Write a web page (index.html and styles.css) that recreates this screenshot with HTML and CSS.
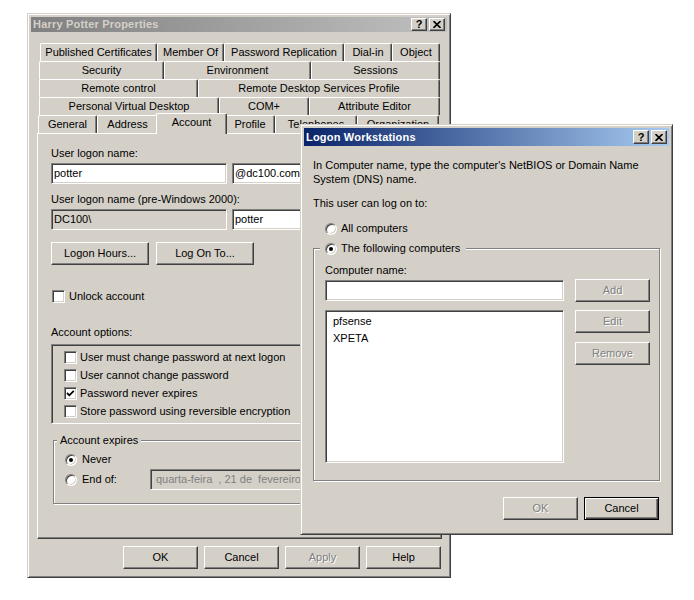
FILE: index.html
```html
<!DOCTYPE html>
<html lang="en">
<head>
    <meta charset="UTF-8">
    <title>Harry Potter Properties</title>
    <link rel="stylesheet" href="styles.css">
</head>
<body>
<div class="desk">

    <!-- properties sheet (inactive) -->
    <section class="win props">
        <div class="title off">
            <span>Harry Potter Properties</span>
            <div class="tbtns">
                <span class="tb">?</span>
                <span class="tb"><svg width="8" height="7" viewBox="0 0 8 7"><path d="M0.5 0 L7.5 7 M7.5 0 L0.5 7" stroke="#000" stroke-width="1.6"/></svg></span>
            </div>
        </div>

        <div class="sheet">
            <div class="tabs">
                <div class="tabrow r1">
                    <span class="tab">Published Certificates</span>
                    <span class="tab">Member Of</span>
                    <span class="tab">Password Replication</span>
                    <span class="tab">Dial-in</span>
                    <span class="tab">Object</span>
                </div>
                <div class="tabrow r2">
                    <span class="tab">Security</span>
                    <span class="tab">Environment</span>
                    <span class="tab">Sessions</span>
                </div>
                <div class="tabrow r3">
                    <span class="tab">Remote control</span>
                    <span class="tab">Remote Desktop Services Profile</span>
                </div>
                <div class="tabrow r4">
                    <span class="tab">Personal Virtual Desktop</span>
                    <span class="tab">COM+</span>
                    <span class="tab">Attribute Editor</span>
                </div>
                <div class="tabrow r5">
                    <span class="tab">General</span>
                    <span class="tab">Address</span>
                    <span class="tab sel">Account</span>
                    <span class="tab">Profile</span>
                    <span class="tab">Telephones</span>
                    <span class="tab">Organization</span>
                </div>
            </div>

            <div class="panel">
                <div class="lbl">User logon name:</div>
                <div class="pair">
                    <div class="field w176">potter</div>
                    <div class="field w180">@dc100.com</div>
                </div>

                <div class="lbl mt9">User logon name (pre-Windows 2000):</div>
                <div class="pair mt2">
                    <div class="field ro w176">DC100\</div>
                    <div class="field w180">potter</div>
                </div>

                <div class="btnrow">
                    <span class="btn w98">Logon Hours...</span>
                    <span class="btn w98">Log On To...</span>
                </div>

                <div class="check unlock">
                    <span class="cb"></span>
                    <span>Unlock account</span>
                </div>

                <div class="lbl mt23">Account options:</div>
                <div class="opts">
                    <div class="check opt"><span class="cb"></span><span>User must change password at next logon</span></div>
                    <div class="check opt"><span class="cb"></span><span>User cannot change password</span></div>
                    <div class="check opt">
                        <span class="cb"><svg width="11" height="11" viewBox="0 0 11 11"><path d="M2 5 L4.3 7.3 L8.8 2.8" fill="none" stroke="#000" stroke-width="1.8"/></svg></span>
                        <span>Password never expires</span>
                    </div>
                    <div class="check opt"><span class="cb"></span><span>Store password using reversible encryption</span></div>
                </div>

                <div class="group expires">
                    <div class="cap">Account expires</div>
                    <div class="radio never"><span class="rb on"></span><span>Never</span></div>
                    <div class="radio endof">
                        <span class="rb"></span>
                        <span class="rlabel">End of:</span>
                        <div class="field dis date">quarta-feira  , 21 de  fevereiro  de 2018</div>
                    </div>
                </div>
            </div>

            <div class="actions">
                <span class="btn">OK</span>
                <span class="btn">Cancel</span>
                <span class="btn off">Apply</span>
                <span class="btn">Help</span>
            </div>
        </div>
    </section>

    <!-- logon workstations (active) -->
    <section class="win logon">
        <div class="title on">
            <span>Logon Workstations</span>
            <div class="tbtns">
                <span class="tb">?</span>
                <span class="tb"><svg width="8" height="7" viewBox="0 0 8 7"><path d="M0.5 0 L7.5 7 M7.5 0 L0.5 7" stroke="#000" stroke-width="1.6"/></svg></span>
            </div>
        </div>

        <div class="wbody">
            <p class="intro">In Computer name, type the computer's NetBIOS or Domain Name<br>System (DNS) name.</p>
            <div class="lbl mt11">This user can log on to:</div>

            <div class="radio allpc"><span class="rb"></span><span>All computers</span></div>

            <div class="group following">
                <div class="cap radio"><span class="rb on"></span><span>The following computers</span></div>
                <div class="lbl mt9">Computer name:</div>
                <div class="picker">
                    <div class="pcol">
                        <div class="field name"></div>
                        <ul class="list">
                            <li>pfsense</li>
                            <li>XPETA</li>
                        </ul>
                    </div>
                    <div class="bcol">
                        <span class="btn off">Add</span>
                        <span class="btn off">Edit</span>
                        <span class="btn off">Remove</span>
                    </div>
                </div>
            </div>

            <div class="actions foot">
                <span class="btn off">OK</span>
                <span class="btn def">Cancel</span>
            </div>
        </div>
    </section>

</div>
</body>
</html>
```

FILE: styles.css
```css
* {
    box-sizing: border-box;
}
body {
    margin: 0;
    background: #fff;
    color: #000;
    font: 11px/13px "Liberation Sans", Arial, sans-serif;
}
.desk {
    position: relative;
    width: 694px;
    height: 600px;
    overflow: hidden;
}

/* window frame */
.win {
    position: absolute;
    background: #d4d0c8;
    border: 1px solid;
    border-color: #d4d0c8 #404040 #404040 #d4d0c8;
    box-shadow: inset 1px 1px #fff, inset -1px -1px #808080;
    padding: 3px;
}
.props {
    left: 27px;
    top: 13px;
    width: 424px;
    height: 565px;
}
.logon {
    left: 300px;
    top: 124px;
    width: 373px;
    height: 411px;
}
.title {
    height: 18px;
    display: flex;
    align-items: center;
    justify-content: space-between;
    padding: 0 2px 0 2px;
    font-weight: bold;
    letter-spacing: 0.2px;
}
.title.off {
    height: 15px;
    background: linear-gradient(to right, #808080, #c0c0c0);
    color: #d4d0c8;
}
.title.on {
    background: linear-gradient(to right, #0a246a, #a6caf0);
    color: #fff;
}
.tbtns {
    display: flex;
    gap: 2px;
}
.tb {
    width: 16px;
    height: 14px;
    display: flex;
    align-items: center;
    justify-content: center;
    background: #d4d0c8;
    color: #000;
    border: 1px solid;
    border-color: #fff #404040 #404040 #fff;
    box-shadow: inset -1px -1px #808080;
    font-size: 11px;
    letter-spacing: 0;
}
.title.off .tb {
    width: 16px;
    height: 13px;
}

/* common controls */
.lbl {
    line-height: 13px;
}
.mt2 { margin-top: 2px; }
.mt9 { margin-top: 9px; }
.mt11 { margin-top: 11px; }
.mt23 { margin-top: 23px; }

.field {
    height: 21px;
    background: #fff;
    border: 1px solid;
    border-color: #808080 #fff #fff #808080;
    box-shadow: inset 1px 1px #404040, inset -1px -1px #d4d0c8;
    padding: 0 2px;
    line-height: 19px;
    white-space: pre;
    overflow: hidden;
}
.field.ro {
    background: #d4d0c8;
}
.field.dis {
    background: #d4d0c8;
    color: #808080;
    padding-left: 5px;
}
.btn {
    width: 75px;
    height: 23px;
    display: flex;
    align-items: center;
    justify-content: center;
    background: #d4d0c8;
    border: 1px solid;
    border-color: #fff #404040 #404040 #fff;
    box-shadow: inset -1px -1px #808080;
}
.btn.off {
    color: #808080;
    text-shadow: 1px 1px #fff;
}
.btn.def {
    border-color: #000;
    box-shadow: inset 1px 1px #fff, inset -1px -1px #404040, inset -2px -2px #808080;
}
.check, .radio {
    display: flex;
    align-items: center;
}
.cb {
    width: 13px;
    height: 13px;
    flex: none;
    display: flex;
    align-items: center;
    justify-content: center;
    background: #fff;
    border: 1px solid;
    border-color: #808080 #fff #fff #808080;
    box-shadow: inset 1px 1px #404040, inset -1px -1px #d4d0c8;
}
.rb {
    position: relative;
    width: 12px;
    height: 12px;
    flex: none;
    border-radius: 50%;
    background: #fff;
    border: 1px solid;
    border-color: #808080 #fff #fff #808080;
    box-shadow: inset 1px 1px #404040, inset -1px -1px #d4d0c8;
    margin-right: 5px;
}
.rb.on::after {
    content: "";
    position: absolute;
    left: 3px;
    top: 3px;
    width: 4px;
    height: 4px;
    border-radius: 50%;
    background: #000;
}
.group {
    border: 1px solid #808080;
    box-shadow: inset 1px 1px #fff, 1px 1px #fff;
}
.cap {
    width: fit-content;
    margin-top: -7px;
    background: #d4d0c8;
    line-height: 13px;
}

/* property sheet */
.sheet {
    padding: 11px 5px 0 6px;
}
.tabs {
    padding: 0 2px;
}
.tabrow {
    display: grid;
    height: 18px;
}
.r1 { grid-template-columns: 117px 67px 120px 48px 48px; margin-left: 1px; }
.r2 { grid-template-columns: 125px 147px 129px; }
.r3 { grid-template-columns: 159px 242px; }
.r4 { grid-template-columns: 180px 90px 131px; }
.r5 { grid-template-columns: 59px 61px 67px 50px 82px 82px; margin-left: -1px; }
.tab {
    height: 18px;
    background: #d4d0c8;
    border: 1px solid;
    border-bottom: 0;
    border-color: #fff #404040 #404040 #fff;
    border-radius: 2px 2px 0 0;
    box-shadow: inset -1px 0 #808080;
    text-align: center;
    line-height: 17px;
    white-space: nowrap;
    overflow: hidden;
}
.tab.sel {
    position: relative;
    z-index: 1;
    height: 21px;
    margin: -2px -2px 0;
    line-height: 16px;
}
.panel {
    height: 406px;
    border: 1px solid;
    border-color: #fff #404040 #404040 #fff;
    box-shadow: inset -1px -1px #808080;
    padding: 13px 0 0 13px;
}
.pair {
    display: flex;
    gap: 5px;
    margin-top: 3px;
}
.w176 { width: 176px; }
.w180 { width: 180px; }
.btnrow {
    display: flex;
    gap: 7px;
    margin-top: 12px;
}
.btn.w98 {
    width: 98px;
}
.unlock {
    margin: 25px 0 0 1px;
    gap: 4px;
}
.opts {
    width: 382px;
    height: 80px;
    margin-top: 5px;
    border: 1px solid;
    border-color: #808080 #fff #fff #808080;
    box-shadow: inset 1px 1px #404040;
    padding: 3px 0 0 12px;
}
.opt {
    height: 18px;
    gap: 3px;
}
.expires {
    width: 380px;
    margin: 16px 0 0 2px;
    padding: 0 0 13px 11px;
}
.expires .cap {
    margin-left: -8px;
    padding: 0 3px;
}
.never {
    height: 13px;
    margin-top: 6px;
}
.endof {
    height: 21px;
    margin-top: 3px;
}
.rlabel {
    width: 68px;
}
.date {
    width: 270px;
}
.actions {
    display: flex;
    justify-content: flex-end;
    gap: 6px;
    margin-top: 7px;
    padding-right: 1px;
}

/* logon workstations */
.wbody {
    padding: 12px 9px 0;
}
.intro {
    margin: 0;
    line-height: 14px;
}
.allpc {
    height: 13px;
    margin: 12px 0 0 12px;
}
.allpc .rb {
    margin-right: 4px;
}
.following {
    margin-top: 13px;
    padding: 0 0 17px 11px;
}
.following .cap {
    height: 13px;
    margin-left: -5px;
    padding: 0 6px 0 5px;
}
.following .rb {
    margin-right: 4px;
}
.picker {
    display: flex;
    gap: 11px;
    margin-top: 2px;
}
.pcol {
    width: 239px;
}
.field.name {
    margin-top: 1px;
}
.list {
    height: 153px;
    margin: 9px 0 0;
    padding: 2px 0 0 7px;
    list-style: none;
    background: #fff;
    border: 1px solid;
    border-color: #808080 #fff #fff #808080;
    box-shadow: inset 1px 1px #404040, inset -1px -1px #d4d0c8;
}
.list li {
    line-height: 17px;
}
.bcol {
    display: flex;
    flex-direction: column;
    gap: 8px;
}
.bcol .btn:last-child {
    margin-top: 1px;
}
.foot {
    margin-top: 16px;
}
```
